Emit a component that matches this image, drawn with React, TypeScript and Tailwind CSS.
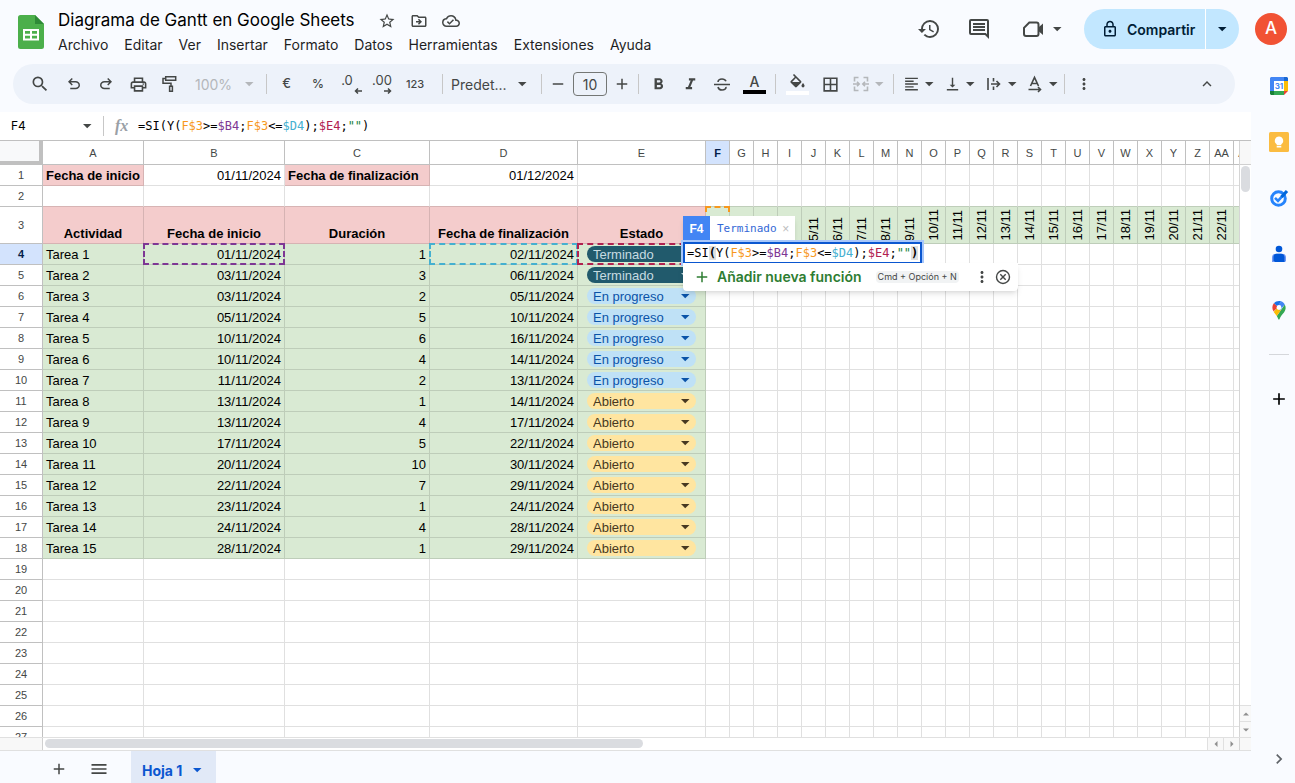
import { useState } from 'react'
import type { ReactNode } from 'react'
import {
  MdAdd,
  MdBorderAll,
  MdFormatAlignLeft,
  MdFormatBold,
  MdFormatItalic,
  MdHistory,
  MdKeyboardArrowRight,
  MdKeyboardArrowUp,
  MdMenu,
  MdMoreVert,
  MdOutlineCloudDone,
  MdOutlineDriveFileMove,
  MdOutlineLock,
  MdOutlinePrint,
  MdRemove,
  MdSearch,
  MdStarBorder,
  MdVerticalAlignBottom,
} from 'react-icons/md'

type Status = 'Terminado' | 'En progreso' | 'Abierto'

interface Task {
  name: string
  start: string
  days: number
  end: string
  status: Status
}

const MENUS = ['Archivo', 'Editar', 'Ver', 'Insertar', 'Formato', 'Datos', 'Herramientas', 'Extensiones', 'Ayuda']

const TASKS: Task[] = [
  { name: 'Tarea 1', start: '01/11/2024', days: 1, end: '02/11/2024', status: 'Terminado' },
  { name: 'Tarea 2', start: '03/11/2024', days: 3, end: '06/11/2024', status: 'Terminado' },
  { name: 'Tarea 3', start: '03/11/2024', days: 2, end: '05/11/2024', status: 'En progreso' },
  { name: 'Tarea 4', start: '05/11/2024', days: 5, end: '10/11/2024', status: 'En progreso' },
  { name: 'Tarea 5', start: '10/11/2024', days: 6, end: '16/11/2024', status: 'En progreso' },
  { name: 'Tarea 6', start: '10/11/2024', days: 4, end: '14/11/2024', status: 'En progreso' },
  { name: 'Tarea 7', start: '11/11/2024', days: 2, end: '13/11/2024', status: 'En progreso' },
  { name: 'Tarea 8', start: '13/11/2024', days: 1, end: '14/11/2024', status: 'Abierto' },
  { name: 'Tarea 9', start: '13/11/2024', days: 4, end: '17/11/2024', status: 'Abierto' },
  { name: 'Tarea 10', start: '17/11/2024', days: 5, end: '22/11/2024', status: 'Abierto' },
  { name: 'Tarea 11', start: '20/11/2024', days: 10, end: '30/11/2024', status: 'Abierto' },
  { name: 'Tarea 12', start: '22/11/2024', days: 7, end: '29/11/2024', status: 'Abierto' },
  { name: 'Tarea 13', start: '23/11/2024', days: 1, end: '24/11/2024', status: 'Abierto' },
  { name: 'Tarea 14', start: '24/11/2024', days: 4, end: '28/11/2024', status: 'Abierto' },
  { name: 'Tarea 15', start: '28/11/2024', days: 1, end: '29/11/2024', status: 'Abierto' },
]

const DAY_COLUMNS = [
  'F', 'G', 'H', 'I', 'J', 'K', 'L', 'M', 'N', 'O', 'P', 'Q',
  'R', 'S', 'T', 'U', 'V', 'W', 'X', 'Y', 'Z', 'AA', 'AB',
]

const EMPTY_ROWS = [19, 20, 21, 22, 23, 24, 25, 26, 27]

const CHIP: Record<Status, string> = {
  Terminado: 'bg-[#215a6c] text-[#c6dbe1]',
  'En progreso': 'bg-[#bfe1f6] text-[#0a53a8]',
  Abierto: 'bg-[#ffe5a0] text-[#473821]',
}

const CELL = 'border-r border-b border-black/12 p-0 px-[3px] align-bottom leading-[18px] whitespace-nowrap'
const HEAD_BASE = 'border-r border-b border-[#c0c0c0] p-0 text-center text-[11px] leading-4'
const HEAD = `${HEAD_BASE} bg-white font-normal text-[#444746]`
const HEAD_ACTIVE = `${HEAD_BASE} bg-[#d3e3fd] font-bold text-[#041e49]`
const MONO = "font-['DejaVu_Sans_Mono',monospace]"

function Caret({ className = '' }: { className?: string }) {
  return (
    <svg viewBox="0 0 18 18" className={`size-[18px] shrink-0 fill-current ${className}`} aria-hidden="true">
      <path d="M5 7h8.500L9.200 11.300z" />
    </svg>
  )
}

function Symbol({ d }: { d: string }) {
  return (
    <svg viewBox="0 -960 960 960" className="size-[18px] shrink-0 fill-current" aria-hidden="true">
      <path d={d} />
    </svg>
  )
}

const UNDO =
  'M280-200v-80h284q63 0 109.500-40T720-420q0-60-46.500-100T564-560H312l104 104-56 56-200-200 200-200 56 56-104 104h252q97 0 166.500 63T800-420q0 94-69.500 157T564-200H280Z'
const REDO =
  'M396-200q-97 0-166.500-63T160-420q0-94 69.500-157T396-640h252L544-744l56-56 200 200-200 200-56-56 104-104H396q-63 0-109.500 40T240-420q0 60 46.500 100T396-280h284v80H396Z'

function Divider({ className = '' }: { className?: string }) {
  return <span className={`h-5 w-px shrink-0 bg-[#c7c7c7] ${className}`} />
}

function ToolButton({
  label,
  width = 'w-8',
  className = '',
  children,
}: {
  label: string
  width?: string
  className?: string
  children: ReactNode
}) {
  return (
    <button
      aria-label={label}
      className={`flex h-7 shrink-0 items-center justify-center rounded hover:bg-black/5 ${width} ${className}`}
    >
      {children}
    </button>
  )
}

function SplitButton({ label, className = '', children }: { label: string; className?: string; children: ReactNode }) {
  return (
    <button aria-label={label} className={`flex h-7 w-[41px] shrink-0 items-center pl-1.5 ${className}`}>
      {children}
      <Caret />
    </button>
  )
}

function Formula({ highlight = false }: { highlight?: boolean }) {
  const paren = highlight ? 'bg-[#e0e0e0] font-bold' : ''
  return (
    <>
      =SI<span className={paren}>(</span>Y(<span className="text-[#f7981d]">F$3</span>&gt;=
      <span className="text-[#7e3794]">$B4</span>;<span className="text-[#f7981d]">F$3</span>&lt;=
      <span className="text-[#45b0d0]">$D4</span>);<span className="text-[#b1214f]">$E4</span>;
      <span className="text-[#188038]">""</span>
      <span className={paren}>)</span>
    </>
  )
}

function SheetsLogo() {
  return (
    <svg viewBox="0 0 26 34" className="mt-[15px] h-[34px] w-[26px] shrink-0" aria-label="Hojas de cálculo">
      <path fill="#4caf4b" d="M2.500 0H17l9 9v22.500a2.500 2.500 0 0 1-2.500 2.500h-21A2.500 2.500 0 0 1 0 31.500v-29A2.500 2.500 0 0 1 2.500 0z" />
      <path fill="#2f8a37" d="M17 0l9 9h-9z" />
      <path fill="#fff" d="M5 14h16v11.500H5z" />
      <path fill="#4caf4b" d="M7 16h5v2.800H7zM14 16h5v2.800h-5zM7 20.700h5v2.800H7zM14 20.700h5v2.800h-5z" />
    </svg>
  )
}

function Header() {
  return (
    <header className="flex h-16 shrink-0 pl-[18px]">
      <SheetsLogo />
      <div className="flex flex-col pt-2 pl-1.5">
        <div className="flex h-6 items-center pl-2 text-[#444746]">
          <h1 className="text-[17px] leading-6 text-black">Diagrama de Gantt en Google Sheets</h1>
          <div className="ml-[23px] flex h-[26px] items-center gap-3.5 pt-0.5 text-[18px]">
            <button aria-label="Destacar"><MdStarBorder /></button>
            <button aria-label="Mover"><MdOutlineDriveFileMove /></button>
            <button aria-label="Estado del documento"><MdOutlineCloudDone /></button>
          </div>
        </div>
        <nav className="flex h-[26px] items-center text-[14px] text-[#1f1f1f]">
          {MENUS.map((menu) => (
            <button key={menu} className="px-2 leading-5">
              {menu}
            </button>
          ))}
        </nav>
      </div>
      <div className="ml-auto flex h-[58px] items-center pr-2 text-[#444746]">
        <button aria-label="Historial" className="mr-[26px] text-[24px]"><MdHistory /></button>
        <button aria-label="Comentarios" className="mr-[30px]">
          <svg viewBox="0 0 24 24" className="size-6 fill-current" aria-hidden="true">
            <path d="M22 4a2 2 0 0 0-2-2H4a2 2 0 0 0-2 2v12a2 2 0 0 0 2 2h14l4 4V4zm-2 0v13.170L18.830 16H4V4h16zM6 12h12v2H6v-2zm0-3h12v2H6V9zm0-3h12v2H6V6z" />
          </svg>
        </button>
        <button aria-label="Videollamada" className="mr-[18px] flex items-center">
          <svg viewBox="0 0 24 24" className="size-6 fill-current" aria-hidden="true">
            <path d="M8.300 5.500h7.200a2 2 0 0 1 2 2v9.500a2 2 0 0 1-2 2H5a2 2 0 0 1-2-2v-6.200z" fill="none" stroke="currentColor" strokeWidth="2" />
            <path d="M18 10l4-3.500v11.500l-4-3.500z" />
          </svg>
          <Caret className="ml-[3px]" />
        </button>
        <div className="mr-4 flex h-10 overflow-hidden rounded-full bg-[#c2e7ff] text-[#001d35]">
          <button className="flex w-[121px] items-center gap-2 pl-[17px] text-[14px] font-semibold">
            <MdOutlineLock className="text-[18px]" />
            Compartir
          </button>
          <span className="w-px bg-white" />
          <button aria-label="Opciones para compartir" className="flex w-[33px] items-center pl-[7px]"><Caret /></button>
        </div>
        <button aria-label="Cuenta" className="size-8 rounded-full bg-[#f15234] text-[17px] font-medium text-white">A</button>
      </div>
    </header>
  )
}

function Toolbar() {
  return (
    <div className="mr-4 mb-2 ml-[13px] flex h-10 shrink-0 items-center rounded-full bg-[#edf2fa] pr-3 pl-[11px] text-[#444746]">
      <ToolButton label="Buscar"><MdSearch className="text-[20px]" /></ToolButton>
      <ToolButton label="Deshacer" className="ml-0.5"><Symbol d={UNDO} /></ToolButton>
      <ToolButton label="Rehacer"><Symbol d={REDO} /></ToolButton>
      <ToolButton label="Imprimir"><MdOutlinePrint className="text-[19px]" /></ToolButton>
      <ToolButton label="Copiar formato">
        <svg viewBox="0 0 18 18" className="size-[18px] fill-none stroke-current stroke-[1.500]" aria-hidden="true">
          <path d="M4.700 1.700h10v3.600h-10zM4.500 3.500H2v4.700h8v3M8.600 11.300h2.800v5H8.600z" />
        </svg>
      </ToolButton>
      <div className="flex w-[76px] shrink-0 items-center pl-[9px] text-[#b4b7ba]">
        <select aria-label="Zoom" className="w-[45px] appearance-none text-[14px] outline-none">
          <option>100%</option>
        </select>
        <Caret />
      </div>
      <Divider className="mx-1" />
      <ToolButton label="Formato de moneda" width="w-[31px]" className="text-[13px] font-medium">€</ToolButton>
      <ToolButton label="Formato de porcentaje" className="text-[12px] font-medium">%</ToolButton>
      <ToolButton label="Reducir decimales" className="relative text-[13px]">
        <span className="pr-1.5 pb-1.5">.0</span>
        <svg viewBox="0 0 8 6" className="absolute right-1 bottom-1 h-1.5 w-2 fill-none stroke-current stroke-[1.500]" aria-hidden="true">
          <path d="M8 3H1.500M4 .5L1.500 3 4 5.500" />
        </svg>
      </ToolButton>
      <ToolButton label="Aumentar decimales" className="relative text-[13px]">
        <span className="pb-1.5">.00</span>
        <svg viewBox="0 0 8 6" className="absolute right-1.5 bottom-1 h-1.5 w-2 fill-none stroke-current stroke-[1.500]" aria-hidden="true">
          <path d="M0 3h6.500M4 .5L6.500 3 4 5.500" />
        </svg>
      </ToolButton>
      <ToolButton label="Más formatos" width="w-[34px]" className="text-[11px] font-medium">123</ToolButton>
      <Divider className="mr-2 ml-[10px]" />
      <div className="flex w-[83px] shrink-0 items-center">
        <select aria-label="Fuente" className="w-[62px] appearance-none text-[14px] outline-none">
          <option>Predet...</option>
        </select>
        <Caret />
      </div>
      <Divider className="mr-1 ml-[7px]" />
      <ToolButton label="Reducir tamaño" width="w-6"><MdRemove className="text-[18px]" /></ToolButton>
      <input
        aria-label="Tamaño de fuente"
        defaultValue="10"
        className="mx-[3px] h-6 w-[34px] rounded border border-[#747775] text-center text-[14px] outline-none"
      />
      <ToolButton label="Aumentar tamaño" width="w-6"><MdAdd className="text-[18px]" /></ToolButton>
      <Divider className="mr-[3px] ml-1" />
      <ToolButton label="Negrita"><MdFormatBold className="text-[19px]" /></ToolButton>
      <ToolButton label="Cursiva"><MdFormatItalic className="text-[19px]" /></ToolButton>
      <ToolButton label="Tachado">
        <svg viewBox="0 0 18 18" className="size-[18px] fill-none stroke-current stroke-[1.600]" aria-hidden="true">
          <path d="M1 9.500h16M13 6.300C12.300 4.700 10.900 4 9 4 6.700 4 5.200 5.200 5 7M5 12c.4 1.900 1.900 3 4 3 2.600 0 4.200-1.300 4-3.200" />
        </svg>
      </ToolButton>
      <ToolButton label="Color del texto" width="w-[33px]">
        <span className="flex w-[23px] flex-col items-center border-b-4 border-black pb-px text-[14px] leading-[15px] font-medium">A</span>
      </ToolButton>
      <Divider className="mx-1" />
      <ToolButton label="Color de relleno" width="w-[34px]">
        <span className="flex w-[23px] justify-center border-b-4 border-white pb-0.5">
          <svg viewBox="0 0 24 19" className="h-[15px] w-[19px] fill-current" aria-hidden="true">
            <path d="M16.560 8.940L7.620 0 6.210 1.410l2.380 2.380-5.150 5.150c-.59.59-.59 1.540 0 2.120l5.500 5.500c.29.29.68.44 1.060.44s.77-.15 1.060-.44l5.500-5.500c.59-.58.59-1.530 0-2.120zM5.210 10L10 5.210 14.790 10H5.210zM19 11.500s-2 2.170-2 3.500c0 1.100.9 2 2 2s2-.9 2-2c0-1.330-2-3.500-2-3.500z" />
          </svg>
        </span>
      </ToolButton>
      <ToolButton label="Bordes"><MdBorderAll className="text-[19px]" /></ToolButton>
      <SplitButton label="Combinar celdas" className="mr-1.5 text-[#b4b7ba]">
        <svg viewBox="0 0 18 18" className="size-[18px] shrink-0 fill-none stroke-current stroke-[1.600]" aria-hidden="true">
          <path d="M6.500 2.500h-4v4M11.500 2.500h4v4M6.500 15.500h-4v-4M11.500 15.500h4v-4M1 9h6M5 6.700L7.200 9 5 11.300M17 9h-6M13 6.700L10.800 9 13 11.300" />
        </svg>
      </SplitButton>
      <Divider className="mr-[3px]" />
      <SplitButton label="Alineación horizontal"><MdFormatAlignLeft className="size-[18px]" /></SplitButton>
      <SplitButton label="Alineación vertical"><MdVerticalAlignBottom className="size-[18px]" /></SplitButton>
      <SplitButton label="Ajuste de texto">
        <svg viewBox="0 0 18 18" className="size-[18px] shrink-0 fill-none stroke-current stroke-[1.600]" aria-hidden="true">
          <path d="M3 3v12M8.500 3v3.500M8.500 11.500V15M6 9h8M11.500 6l3 3-3 3" />
        </svg>
      </SplitButton>
      <SplitButton label="Rotación de texto">
        <svg viewBox="0 0 18 18" className="size-[18px] shrink-0 fill-none stroke-current stroke-[1.600]" aria-hidden="true">
          <path d="M4.500 11L8.500 2.500l4 8.500M6 8.500h5M2.500 14.500h12M12 12l2.500 2.500L12 17" />
        </svg>
      </SplitButton>
      <Divider className="mx-[3px]" />
      <ToolButton label="Más"><MdMoreVert className="text-[18px]" /></ToolButton>
      <ToolButton label="Ocultar menús" className="ml-auto"><MdKeyboardArrowUp className="text-[18px]" /></ToolButton>
    </div>
  )
}

function FormulaBar() {
  const [name, setName] = useState('F4')
  return (
    <div className="flex h-7 shrink-0 items-center bg-white pl-[11px] text-black">
      <input
        aria-label="Cuadro de nombres"
        value={name}
        onChange={(e) => setName(e.target.value)}
        className="w-[67px] text-[12px] outline-none"
      />
      <button aria-label="Intervalos con nombre" className="text-[#444746]"><Caret /></button>
      <Divider className="ml-[7px]" />
      <span className="ml-[11px] w-[23px] font-['Liberation_Serif',serif] text-[16px] font-bold text-[#9aa0a6] italic">fx</span>
      <div role="textbox" aria-label="Fórmula" className={`text-[12px] whitespace-nowrap ${MONO}`}>
        <Formula />
      </div>
    </div>
  )
}

function Marquee({ color }: { color: string }) {
  return <span className={`pointer-events-none absolute -inset-px border-2 border-dashed ${color}`} />
}

function StatusChip({ task }: { task: Task }) {
  const [status, setStatus] = useState(task.status)
  return (
    <div className={`mx-1.5 mb-0.5 flex h-4 items-center rounded-full pr-0.5 pl-1.5 ${CHIP[status]}`}>
      <select
        aria-label={`Estado de ${task.name}`}
        value={status}
        onChange={(e) => setStatus(e.target.value as Status)}
        className="min-w-0 flex-1 appearance-none pt-px leading-[17px] outline-none"
      >
        <option>Terminado</option>
        <option>En progreso</option>
        <option>Abierto</option>
      </select>
      <Caret />
    </div>
  )
}

function CellEditor() {
  return (
    <div className="absolute -top-7 left-[-23px] z-20 w-max text-left">
      <div className="flex h-[25px] w-28 items-stretch bg-white shadow-md">
        <span className="flex w-[27px] items-center justify-center bg-[#4285f4] text-[12px] font-bold text-white">F4</span>
        <span className={`flex items-center pl-[7px] text-[11px] text-[#3367d6] ${MONO}`}>Terminado</span>
        <button aria-label="Cerrar vista previa" className="flex-1 text-[12px] text-[#bdbdbd]">×</button>
      </div>
      <div
        role="textbox"
        aria-label="Editar F4"
        className={`relative mt-px flex h-[22px] w-[239px] items-center border-2 border-[#0b57d0] bg-white pl-0.5 text-[12px] text-black ring-2 ring-[#a8c7fa] ${MONO}`}
      >
        <span><Formula highlight /></span>
      </div>
      <div className="relative -mt-px flex h-7 w-[335px] items-center rounded-b bg-white pl-[10px] text-[#444746] shadow-md">
        <button className="flex items-center gap-1.5 font-['Inter',sans-serif] text-[14px] font-semibold text-[#2e7d32]">
          <MdAdd className="text-[18px]" />
          Añadir nueva función
        </button>
        <kbd className="ml-3.5 rounded-sm bg-[#f1f3f4] px-0.5 font-['Inter',sans-serif] text-[9px] leading-3">Cmd + Opción + N</kbd>
        <button aria-label="Más opciones" className="ml-auto"><MdMoreVert className="text-[18px]" /></button>
        <button aria-label="Cerrar" className="mr-[7px] ml-1">
          <svg viewBox="0 0 16 16" className="size-4 fill-none stroke-current stroke-[1.400]" aria-hidden="true">
            <circle cx="8" cy="8" r="6.500" />
            <path d="M5.300 5.300l5.400 5.400M10.700 5.300l-5.400 5.400" />
          </svg>
        </button>
      </div>
    </div>
  )
}

function DayCells({ className = '' }: { className?: string }) {
  return (
    <>
      {DAY_COLUMNS.map((col) => (
        <td key={col} className={`${CELL} ${className}`} />
      ))}
    </>
  )
}

function Grid() {
  const red = 'bg-[#f4cccc]'
  const green = 'bg-[#d9ead3]'
  return (
    <table className="w-[1258px] table-fixed border-separate border-spacing-0 font-['Liberation_Sans',Arial,sans-serif] text-[13px] text-black">
      <colgroup>
        <col className="w-[43px]" />
        <col className="w-[101px]" />
        <col className="w-[141px]" />
        <col className="w-[145px]" />
        <col className="w-[148px]" />
        <col className="w-[128px]" />
        {DAY_COLUMNS.map((col) => (
          <col key={col} className="w-6" />
        ))}
      </colgroup>
      <thead>
        <tr className="h-6">
          <td className="border-r-4 border-b-4 border-[#c0c0c0] bg-[#f8f9fa] p-0" />
          {['A', 'B', 'C', 'D', 'E'].map((col) => (
            <th key={col} scope="col" className={HEAD}>{col}</th>
          ))}
          {DAY_COLUMNS.map((col) => (
            <th key={col} scope="col" className={col === 'F' ? HEAD_ACTIVE : HEAD}>
              {col}
            </th>
          ))}
        </tr>
      </thead>
      <tbody>
        <tr className="h-[21px]">
          <th scope="row" className={HEAD}>1</th>
          <td className={`${CELL} ${red} font-bold`}>Fecha de inicio</td>
          <td className={`${CELL} text-right`}>01/11/2024</td>
          <td className={`${CELL} ${red} font-bold`}>Fecha de finalización</td>
          <td className={`${CELL} text-right`}>01/12/2024</td>
          <td className={CELL} />
          <DayCells />
        </tr>
        <tr className="h-[21px]">
          <th scope="row" className={HEAD}>2</th>
          {['A', 'B', 'C', 'D', 'E'].map((col) => (
            <td key={col} className={`${CELL} border-b-[#d7b4b4]`} />
          ))}
          <DayCells className="border-b-[#bfceba]" />
        </tr>
        <tr className="h-[37px]">
          <th scope="row" className={HEAD}>3</th>
          {['Actividad', 'Fecha de inicio', 'Duración', 'Fecha de finalización', 'Estado'].map((title) => (
            <td key={title} className={`${CELL} ${red} text-center font-bold`}>{title}</td>
          ))}
          {DAY_COLUMNS.map((col, i) => (
            <td key={col} className={`${CELL} ${green} relative`}>
              {i < 22 && (
                <span className="block w-[17px] rotate-180 pt-0.5 leading-[17px] [writing-mode:vertical-rl]">{i + 1}/11</span>
              )}
              {col === 'F' && <Marquee color="border-[#f7981d]" />}
            </td>
          ))}
        </tr>
        {TASKS.map((task, i) => (
          <tr key={task.name} className="h-[21px]">
            <th scope="row" className={i === 0 ? HEAD_ACTIVE : HEAD}>{i + 4}</th>
            <td className={`${CELL} ${green}`}>{task.name}</td>
            <td className={`${CELL} ${green} relative text-right`}>
              {task.start}
              {i === 0 && <Marquee color="border-[#7e3794]" />}
            </td>
            <td className={`${CELL} ${green} text-right`}>{task.days}</td>
            <td className={`${CELL} ${green} relative text-right`}>
              {task.end}
              {i === 0 && <Marquee color="border-[#45b0d0]" />}
            </td>
            <td className={`${CELL} ${green} relative`}>
              <StatusChip task={task} />
              {i === 0 && <Marquee color="border-[#b1214f]" />}
            </td>
            {DAY_COLUMNS.map((col) => (
              <td key={col} className={`${CELL} relative`}>{i === 0 && col === 'F' && <CellEditor />}</td>
            ))}
          </tr>
        ))}
        {EMPTY_ROWS.map((row) => (
          <tr key={row} className="h-[21px]">
            <th scope="row" className={HEAD}>{row}</th>
            {['A', 'B', 'C', 'D', 'E'].map((col) => (
              <td key={col} className={CELL} />
            ))}
            <DayCells />
          </tr>
        ))}
      </tbody>
    </table>
  )
}

function ScrollArrow({ label, d, className }: { label: string; d: string; className: string }) {
  return (
    <button aria-label={label} className={`flex shrink-0 items-center justify-center border-[#e0e0e0] bg-[#f8f8f8] text-[#8f8f8f] ${className}`}>
      <svg viewBox="0 0 8 8" className="size-2 fill-current" aria-hidden="true">
        <path d={d} />
      </svg>
    </button>
  )
}

function Scrollbars({ children }: { children: ReactNode }) {
  return (
    <>
      <div className="flex min-h-0 flex-1 border-y border-t-[#c0c0c0] border-b-[#e0e0e0] bg-white">
        <div className="min-w-0 flex-1 overflow-hidden">{children}</div>
        <div className="flex w-3 shrink-0 flex-col border-l border-[#d5d5d5]">
          <div className="h-6 shrink-0 border-b border-[#d0d0d0] bg-[#f8f8f8]" />
          <div className="flex-1 p-px">
            <div className="h-[26px] rounded-full bg-[#dadce0]" />
          </div>
          <ScrollArrow label="Subir" d="M1 5.500L4 2.500l3 3z" className="h-4 border-t" />
          <ScrollArrow label="Bajar" d="M1 2.500h6l-3 3z" className="h-4 border-t" />
        </div>
      </div>
      <div className="flex h-[13px] shrink-0 border-b border-[#e0e0e0] bg-white">
        <div className="w-[43px] shrink-0 border-r border-[#d0d0d0] bg-[#f8f8f8]" />
        <div className="flex-1 py-px pl-0.5">
          <div className="h-[9px] w-[51.500%] rounded-full bg-[#dadce0]" />
        </div>
        <ScrollArrow label="Izquierda" d="M5.500 1v6l-3-3z" className="w-4 border-l" />
        <ScrollArrow label="Derecha" d="M2.500 1v6l3-3z" className="w-4 border-l" />
        <div className="w-3 border-l border-[#d5d5d5] bg-[#f8f8f8]" />
      </div>
    </>
  )
}

function SheetTabs() {
  return (
    <footer className="flex h-8 shrink-0 text-[#444746]">
      <button aria-label="Añadir hoja" className="ml-[50px] pt-1 text-[18px]"><MdAdd /></button>
      <button aria-label="Todas las hojas" className="ml-[21px] pt-1 text-[20px]"><MdMenu /></button>
      <button className="ml-[22px] flex w-[85px] items-center bg-[#e1e9f7] pt-1.5 pl-[11px] text-[14px] font-bold text-[#0b57d0]">
        Hoja 1
        <Caret className="ml-1.5" />
      </button>
    </footer>
  )
}

function SidePanel() {
  return (
    <aside className="flex w-11 shrink-0 flex-col items-center pt-3 pl-3">
      <div className="flex flex-col gap-9">
        <button aria-label="Calendar">
          <svg viewBox="0 0 20 20" className="size-5">
            <path fill="#fff" d="M4 4h12v12H4z" />
            <path fill="#4285f4" d="M2 1h13v4H5v10H1V2z" />
            <path fill="#1967d2" d="M15 1h3l1 1v3h-4z" />
            <path fill="#fbbc04" d="M15 5h4v10h-4z" />
            <path fill="#34a853" d="M5 15h10v4H5z" />
            <path fill="#188038" d="M1 15h4v4H2l-1-1z" />
            <path fill="#ea4335" d="M15 15h4l-4 4z" />
            <text x="10" y="13" textAnchor="middle" fontSize="8" fontWeight="700" fill="#4285f4">31</text>
          </svg>
        </button>
        <button aria-label="Keep">
          <svg viewBox="0 0 20 20" className="size-5">
            <rect width="20" height="20" rx="1.500" fill="#fbbc41" />
            <path fill="#fff" d="M10 4.500a4.200 4.200 0 0 0-2.300 7.700v1h4.600v-1A4.200 4.200 0 0 0 10 4.500zM7.700 14h4.600v1.600H7.700z" />
          </svg>
        </button>
        <button aria-label="Tasks">
          <svg viewBox="0 0 20 20" className="size-5 fill-none">
            <circle cx="9.500" cy="10.500" r="6.800" stroke="#2684fc" strokeWidth="3" />
            <path stroke="#2684fc" strokeWidth="2.600" d="M6 9.800l3 3 5-5.500" />
            <path stroke="#0066da" strokeWidth="3.200" d="M12.500 9l5.500-6" />
          </svg>
        </button>
        <button aria-label="Contactos">
          <svg viewBox="0 0 20 20" className="size-5">
            <circle cx="10" cy="5" r="3.300" fill="#0057d8" />
            <path fill="#6f97f5" d="M3 18v-4.500C3 11 4.500 9.800 7 9.800h6c2.500 0 4 1.200 4 3.700V17l-1 1z" />
            <path fill="#0057d8" d="M6 18l-1.500-1.500V13c0-2 1.200-3.200 3.200-3.200H12c2.200 0 3.500 1.300 3.500 3.500V18z" />
          </svg>
        </button>
        <button aria-label="Maps">
          <svg viewBox="0 0 20 20" className="size-5">
            <path fill="#34a853" d="M15.800 4.500c1.500 3 1 5.500-.8 8-1.800 2.300-3.500 3.800-4.200 6-.3 1-.6 1-.9 1s-.6 0-.9-1c-.3-.8-.7-1.700-1.200-2.500z" />
            <path fill="#fbbc04" d="M12 10L7.800 16c-.9-1.400-2.200-2.600-3.100-4l4-5z" />
            <path fill="#ea4335" d="M4.500 11.500C2.800 8.700 3 5.500 5 3.100L9 7z" />
            <path fill="#1a73e8" d="M5 3.200C6.500 1.500 9.300.6 12 1.300L9 7z" />
            <path fill="#4285f4" d="M12 1.300c1.800.5 3 1.700 3.800 3.300l-5 6L8 7z" />
            <circle cx="10" cy="7.500" r="2.400" fill="#fff" />
          </svg>
        </button>
      </div>
      <span className="my-[34px] h-px w-5 bg-[#d5d7db]" />
      <button aria-label="Instalar complementos" className="text-[20px] text-black"><MdAdd /></button>
      <button aria-label="Ocultar panel lateral" className="mt-auto mb-3.5 text-[20px] text-[#5f6368]"><MdKeyboardArrowRight /></button>
    </aside>
  )
}

export default function App() {
  return (
    <div className="flex h-screen flex-col overflow-hidden bg-[#f9fbff] font-['Inter','Open_Sans',sans-serif]">
      <Header />
      <div className="flex min-h-0 flex-1">
        <main className="flex min-w-0 flex-1 flex-col">
          <Toolbar />
          <FormulaBar />
          <Scrollbars>
            <Grid />
          </Scrollbars>
          <SheetTabs />
        </main>
        <SidePanel />
      </div>
    </div>
  )
}
